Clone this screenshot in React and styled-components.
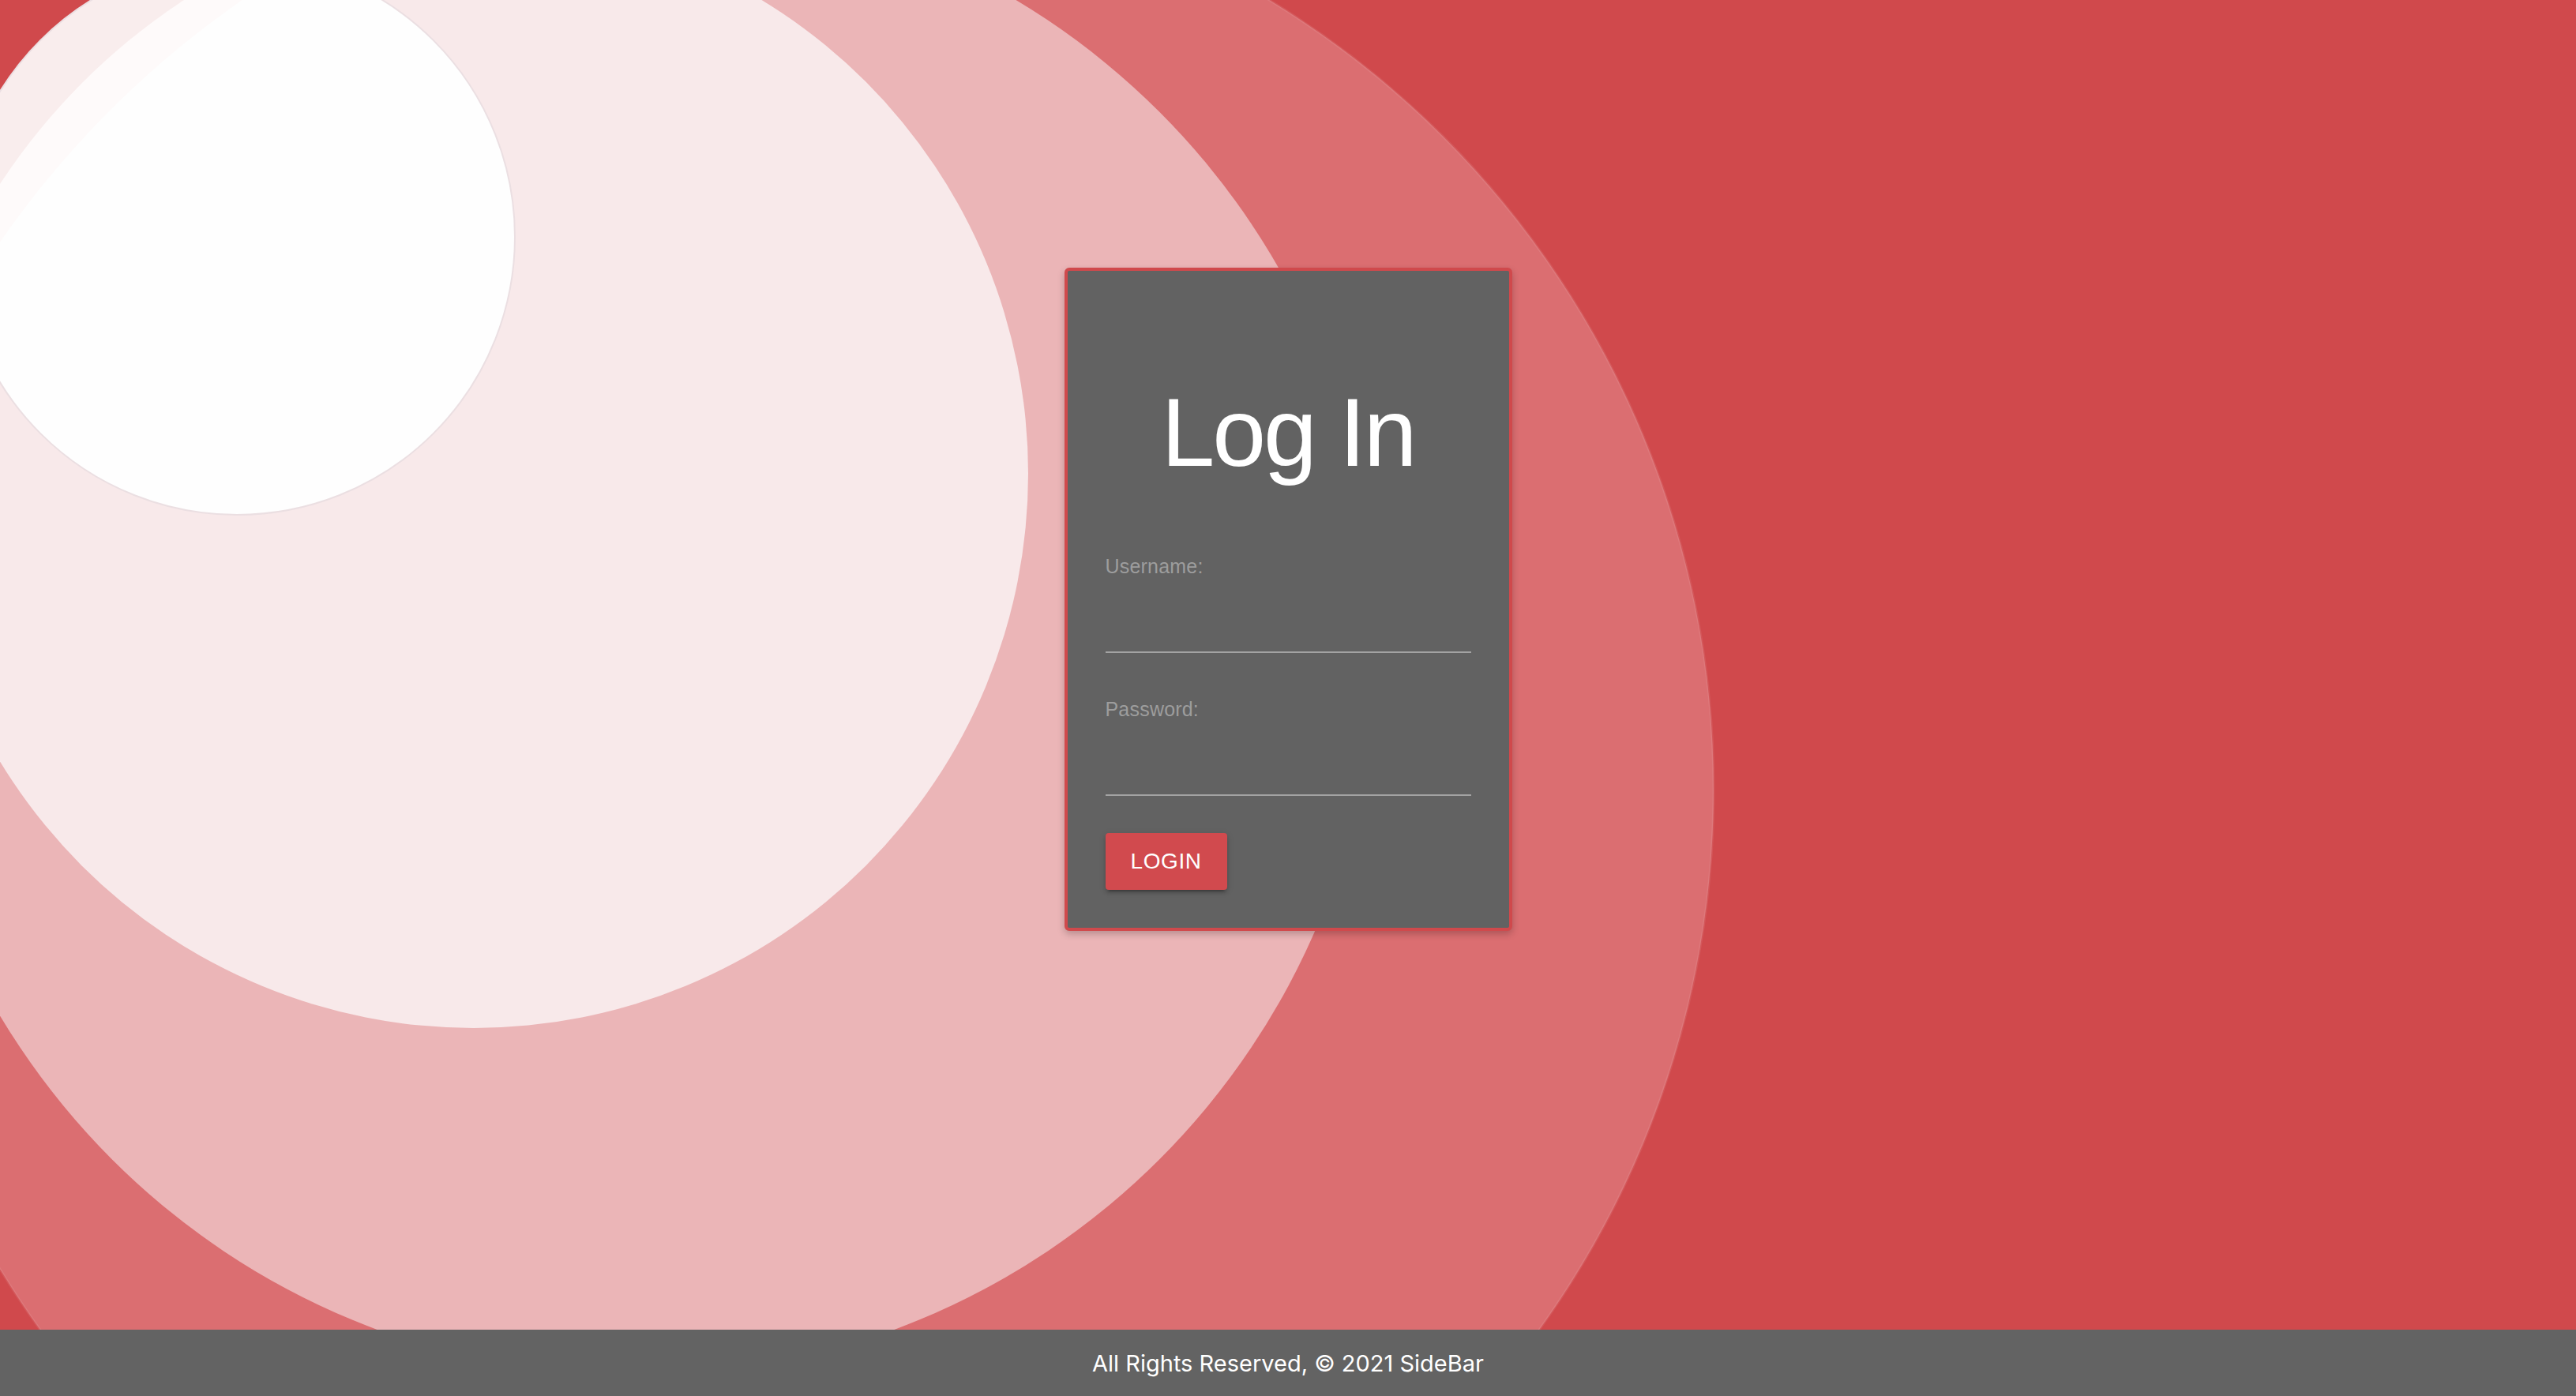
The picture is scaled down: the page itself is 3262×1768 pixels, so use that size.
import React from "react";
import styled, { createGlobalStyle } from "styled-components";

const GlobalStyle = createGlobalStyle`
  html, body {
    margin: 0;
    padding: 0;
    height: 100%;
  }
  body {
    font-family: "Liberation Sans", Arial, sans-serif;
    background: #d0494c;
  }
  #root {
    height: 100%;
  }
  * {
    box-sizing: border-box;
  }
`;

const Page = styled.div`
  height: 100vh;
  display: flex;
  flex-direction: column;
  overflow: hidden;
`;

const Main = styled.main`
  flex: 1;
  min-height: 0;
  display: grid;
  grid-template-rows: 1fr;
  grid-template-columns: 1fr;
  background: #d0494c;
  overflow: hidden;
`;

const Backdrop = styled.svg`
  grid-area: 1 / 1;
  display: block;
  width: 100%;
  height: 100%;
`;

const Card = styled.form`
  grid-area: 1 / 1;
  align-self: start;
  justify-self: center;
  margin-top: 339px;
  width: 567px;
  padding: 48px;
  display: flex;
  flex-direction: column;
  background: #626262;
  border: 4px solid #d0494c;
  border-radius: 6px;
  box-shadow: 0 4px 10px rgba(0, 0, 0, 0.22);
`;

const Title = styled.h1`
  margin: 96px 0 0;
  font-family: "Liberation Sans", Helvetica, Arial, sans-serif;
  font-size: 122px;
  font-weight: 400;
  line-height: 122px;
  letter-spacing: -3px;
  text-align: center;
  color: #ffffff;
`;

const Field = styled.label`
  display: flex;
  flex-direction: column;
  margin-top: ${(p) => p.$gap}px;
`;

const FieldLabel = styled.span`
  font-family: "Liberation Sans", Helvetica, Arial, sans-serif;
  font-size: 25px;
  line-height: 25px;
  letter-spacing: 0.2px;
  color: #9d9d9d;
`;

const Input = styled.input`
  height: 97px;
  width: 100%;
  padding: 0;
  border: none;
  border-bottom: 2px solid #a3a3a3;
  background: transparent;
  color: #ffffff;
  font-family: "Liberation Sans", Helvetica, Arial, sans-serif;
  font-size: 28px;
  outline: none;
`;

const Button = styled.button`
  align-self: flex-start;
  margin-top: 47px;
  height: 72px;
  padding: 0 32px;
  border: none;
  border-radius: 4px;
  background: #d14a4e;
  color: #ffffff;
  font-family: "Liberation Sans", Helvetica, Arial, sans-serif;
  font-size: 28px;
  font-weight: 400;
  letter-spacing: 0.6px;
  text-transform: uppercase;
  cursor: pointer;
  box-shadow: 0 6px 2px -4px rgba(0, 0, 0, 0.2), 0 4px 4px 0 rgba(0, 0, 0, 0.14),
    0 2px 10px 0 rgba(0, 0, 0, 0.12);
`;

const Footer = styled.footer`
  flex: 0 0 84px;
  display: flex;
  align-items: center;
  justify-content: center;
  background: #636363;
  color: #ffffff;
  font-family: Inter, "Noto Sans", sans-serif;
  font-size: 29px;
`;

function Circles() {
  return (
    <Backdrop aria-hidden="true">
      <defs>
        <clipPath id="innerDisc">
          <circle cx="300" cy="300" r="352" />
        </clipPath>
      </defs>
      <circle
        cx="1000"
        cy="1000"
        r="1170"
        fill="#db6e71"
        stroke="rgba(255,255,255,0.08)"
        strokeWidth="3"
      />
      <circle cx="805" cy="805" r="938" fill="#ebb5b7" />
      <circle cx="600" cy="600" r="702" fill="#f8e9ea" />
      <circle cx="300" cy="300" r="352" fill="#f9eded" />
      <g clipPath="url(#innerDisc)">
        <circle cx="678" cy="678" r="811" fill="#fefafa" />
        <circle cx="998" cy="998" r="1214" fill="#fefefe" />
      </g>
      <circle cx="300" cy="300" r="352" fill="none" stroke="#ebdfe2" strokeWidth="2" />
    </Backdrop>
  );
}

export default function App() {
  return (
    <>
      <GlobalStyle />
      <Page>
        <Main>
          <Circles />
          <Card onSubmit={(e) => e.preventDefault()}>
            <Title>Log In</Title>
            <Field $gap={96}>
              <FieldLabel>Username:</FieldLabel>
              <Input type="text" />
            </Field>
            <Field $gap={59}>
              <FieldLabel>Password:</FieldLabel>
              <Input type="password" />
            </Field>
            <Button type="submit">Login</Button>
          </Card>
        </Main>
        <Footer>All Rights Reserved, © 2021 SideBar</Footer>
      </Page>
    </>
  );
}
